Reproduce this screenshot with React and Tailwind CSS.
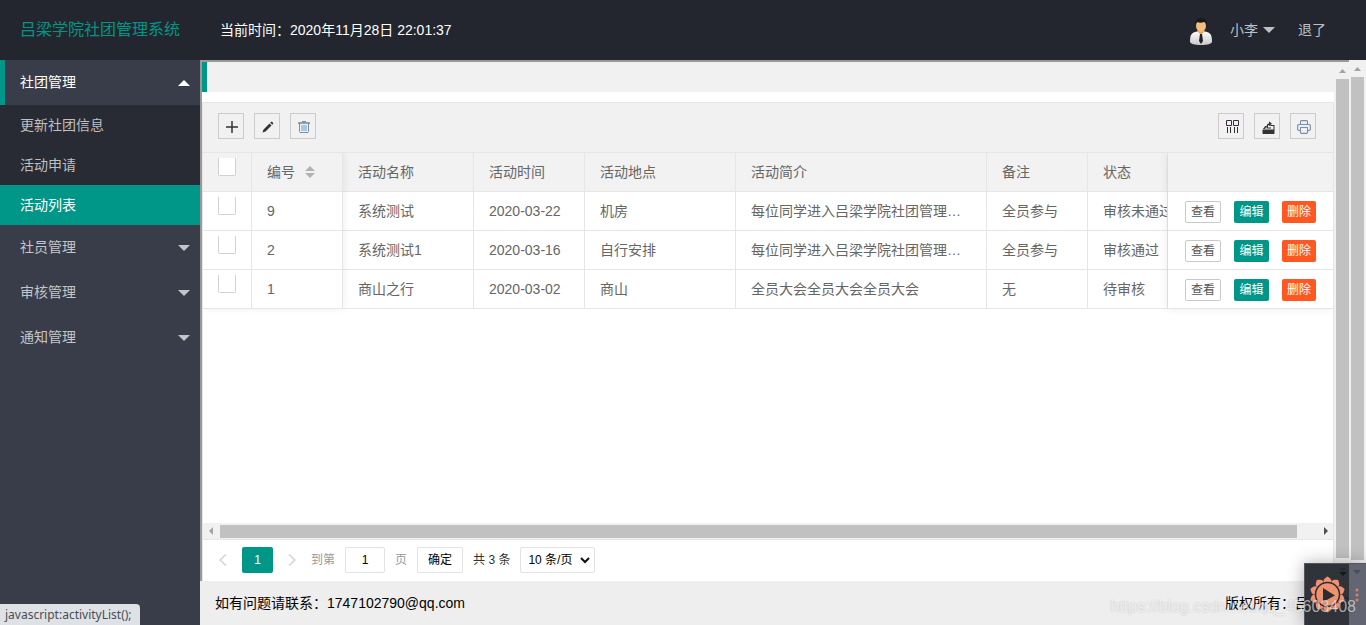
import React from "react";

const rows = [
  { id: "9", name: "系统测试", date: "2020-03-22", place: "机房", intro: "每位同学进入吕梁学院社团管理…", note: "全员参与", status: "审核未通过" },
  { id: "2", name: "系统测试1", date: "2020-03-16", place: "自行安排", intro: "每位同学进入吕梁学院社团管理…", note: "全员参与", status: "审核通过" },
  { id: "1", name: "商山之行", date: "2020-03-02", place: "商山", intro: "全员大会全员大会全员大会", note: "无", status: "待审核" },
];

function Arrow({ className, dir = "down", size = "w-3 h-1.5" }) {
  const d = { down: "M0 0h12L6 6z", up: "M0 6h12L6 0z" }[dir];
  return (
    <svg viewBox="0 0 12 6" preserveAspectRatio="none" className={`${size} ${className}`} fill="currentColor">
      <path d={d} />
    </svg>
  );
}

function MenuGroup({ label, open, children }) {
  return (
    <li>
      <a
        href="#"
        className={
          open
            ? "flex h-[45px] items-center justify-between border-l-[5px] border-[#009688] pr-2.5 pb-0.5 pl-[15px] text-white"
            : "flex h-[45px] items-center justify-between pr-2.5 pb-0.5 pl-5 text-[#c4c5c9]"
        }
      >
        <span>{label}</span>
        <Arrow dir={open ? "up" : "down"} className="mt-0.5" />
      </a>
      {children}
    </li>
  );
}

function SubItem({ label, active }) {
  return (
    <li>
      <a
        href="#"
        className={
          active
            ? "flex h-10 items-center bg-[#009688] pl-5 text-white"
            : "flex h-10 items-center pl-5 text-[#bebfc2]"
        }
      >
        {label}
      </a>
    </li>
  );
}

function ToolButton({ label, children }) {
  return (
    <button type="button" aria-label={label} className="flex size-[26px] items-center justify-center border border-[#ccc] text-[#333]">
      {children}
    </button>
  );
}

function Check({ label }) {
  return (
    <input
      type="checkbox"
      aria-label={label}
      className="mt-[5px] block size-[18px] appearance-none rounded-b-xs border border-t-0 border-[#d2d2d2] bg-white"
    />
  );
}

function VerticalBar({ className, end }) {
  return (
    <div className={`flex shrink-0 flex-col items-center bg-[#f1f1f1] ${className}`}>
      <div className="flex h-[17px] items-center text-[#a3a3a3]">
        <Arrow dir="up" size="w-[7px] h-1" className="" />
      </div>
      <div className="w-[13px] flex-1 bg-[#c1c1c1]" />
      <div className={`flex items-start pt-2.5 text-[#505050] ${end}`}>
        <Arrow size="w-[7px] h-1" className="" />
      </div>
    </div>
  );
}

const petals = [0, 36, 72, 108, 144, 180, 216, 252, 288, 324];
const th = "h-[39px] border-r border-b border-[#e6e6e6] px-[15px] text-left font-normal";
const td = "h-[39px] border-r border-b border-[#e6e6e6] px-[15px]";

export default function App() {
  return (
    <div className="relative flex h-screen flex-col overflow-hidden bg-white font-['Liberation_Sans','Noto_Sans_CJK_SC',sans-serif] text-sm text-[#333]">
      <header className="flex h-[60px] shrink-0 items-center bg-[#23262e]">
        <h1 className="w-[200px] pl-5 text-base text-[#009688]">吕梁学院社团管理系统</h1>
        <div className="pl-5 text-white">当前时间：2020年11月28日 22:01:37</div>
        <nav className="ml-auto flex items-center pr-10 text-[#bfc0c3]">
          <svg viewBox="0 0 24 28" className="mt-1 mr-[17px] h-7 w-6">
            <defs>
              <linearGradient id="shirt" x1="0" y1="0" x2="0" y2="1">
                <stop offset="0" stopColor="#fff" />
                <stop offset="1" stopColor="#c9c9c9" />
              </linearGradient>
            </defs>
            <path d="M1 24c0-6 1-9 5-10l4-1h4l4 1c4 1 5 4 5 10-1 2-4 3-11 3S2 26 1 24z" fill="url(#shirt)" />
            <path d="M9 11h6v3l-3 3-3-3z" fill="#e8a45c" />
            <ellipse cx="12" cy="8" rx="5" ry="6" fill="#f5bd7c" />
            <path d="M6 6c0-4 3-6 6-6s6 2 6 6c-1-1-2-2-3-2-2 1-5 1-7 0-1 0-1 1-2 2z" fill="#1c1a18" />
            <path d="M11 16h2l1 7-2 3-2-3z" fill="#222" />
          </svg>
          <a href="#" className="flex items-center gap-[5px]">
            小李
            <Arrow className="" />
          </a>
          <a href="#" className="ml-[23px]">退了</a>
        </nav>
      </header>

      <div className="flex min-h-0 flex-1">
        <aside className="w-[200px] shrink-0 bg-[#393d49]">
          <ul>
            <MenuGroup label="社团管理" open>
              <ul className="bg-[#282b33]">
                <SubItem label="更新社团信息" />
                <SubItem label="活动申请" />
                <SubItem label="活动列表" active />
              </ul>
            </MenuGroup>
            <MenuGroup label="社员管理" />
            <MenuGroup label="审核管理" />
            <MenuGroup label="通知管理" />
          </ul>
        </aside>

        <div className="flex min-w-0 flex-1 flex-col">
          <div className="flex min-h-0 flex-1">
            <div className="flex min-w-0 flex-1 border-t-2 border-l-2 border-[#999]">
              <main className="flex min-w-0 flex-1 flex-col">
                <div className="mb-2.5 h-[30px] shrink-0 border-l-[5px] border-[#009688] bg-[#f1f1f1]" />
                <div className="flex min-h-0 flex-1 flex-col border-x border-t border-[#e6e6e6]">
                  <div className="flex h-[50px] shrink-0 items-start gap-2.5 border-b border-[#e6e6e6] bg-[#f1f1f1] pt-2.5 pr-[17px] pl-[15px]">
                    <ToolButton label="添加">
                      <svg viewBox="0 0 12 12" className="mt-0.5 ml-0.5 size-3" stroke="currentColor" strokeWidth="1.500"><path d="M6 0v12M0 6h12" /></svg>
                    </ToolButton>
                    <ToolButton label="编辑">
                      <svg viewBox="0 0 12 12" className="mt-0.5 ml-0.5 size-3" fill="currentColor"><path d="M0.500 11.500l1-3L7.500 2.500l2 2L3.500 10.500zM8.200 1.800l1-1c.7-.6 2.600 1.200 2 2l-1 1z" /></svg>
                    </ToolButton>
                    <ToolButton label="删除">
                      <svg viewBox="0 0 12 12" className="mt-0.5 ml-0.5 size-3" fill="none" stroke="#7f8b96">
                        <path d="M4 .5h4" />
                        <path d="M0 2h12" strokeWidth="1.600" />
                        <path d="M1.500 2.500v8l.5 1h8l.5-1v-8" />
                        <path d="M4 4v6M6 4v6M8 4v6" stroke="#5b9fdc" />
                      </svg>
                    </ToolButton>
                    <div className="ml-auto flex gap-2.5">
                      <ToolButton label="筛选列">
                        <svg viewBox="0 0 13 13" className="ml-[3px] size-[13px]" fill="none" stroke="#3a2a40"><path d="M.5 .5h5v5h-5zM7.500 .5h5v5h-5zM1.500 7v6M4.500 7v6M8.500 7v6M11.500 7v6" /></svg>
                      </ToolButton>
                      <ToolButton label="导出">
                        <svg viewBox="0 0 13 13" className="mt-0.5 ml-0.5 size-[13px]" fill="currentColor"><path d="M0.500 8.500h12v4l-.5.500H1l-.5-.5zM1 8L3.200 5h1.600L3 8zM11.500 8.500V5H8.500v-1h4v4.500zM4.500 7c0-3 .5-4.500 2.500-4.500V.3L10 2.800 7 5.300V4C6 4 6 5 6 6.500h3v1H4.500z" /></svg>
                      </ToolButton>
                      <ToolButton label="打印">
                        <svg viewBox="0 0 14 14" className="mt-0.5 ml-0.5 size-3.5" fill="none" stroke="#7c8fa3" strokeWidth="1.100">
                          <path d="M3.500 4V1.500l.7-.9h5.600l.7.9V4M3.500 10.500H1.600L.6 9.500v-4l1-1h10.800l1 1v4l-1 1h-1.900" />
                          <path d="M3.500 7.500h7v5l-.7.9H4.200l-.7-.9z" />
                          <path d="M3.500 4.500h7" stroke="#5b9fdc" />
                        </svg>
                      </ToolButton>
                    </div>
                  </div>

                  <div className="relative min-h-0 flex-1 overflow-hidden">
                    <table className="w-full table-fixed border-separate border-spacing-0 leading-5 whitespace-nowrap text-[#666]">
                      <colgroup>
                        <col className="w-[49px]" />
                        <col className="w-[91px]" />
                        <col className="w-[131px]" />
                        <col className="w-[111px]" />
                        <col className="w-[151px]" />
                        <col className="w-[251px]" />
                        <col className="w-[101px]" />
                        <col />
                        <col className="w-[165px]" />
                      </colgroup>
                      <thead>
                        <tr className="bg-[#f2f2f2]">
                          <th className={`${th} align-top`}><Check label="全选" /></th>
                          <th className={th}>
                            <div className="flex items-center gap-2.5">
                              编号
                              <span className="flex flex-col gap-0.5 text-[#b2b2b2]">
                                <Arrow dir="up" size="w-2.5 h-[5px]" className="" />
                                <Arrow size="w-2.5 h-[5px]" className="" />
                              </span>
                            </div>
                          </th>
                          <th className={th}>活动名称</th>
                          <th className={th}>活动时间</th>
                          <th className={th}>活动地点</th>
                          <th className={th}>活动简介</th>
                          <th className={th}>备注</th>
                          <th className={th}>状态</th>
                          <th className="border-b border-[#e6e6e6]" aria-label="操作" />
                        </tr>
                      </thead>
                      <tbody>
                        {rows.map((r) => (
                          <tr key={r.id}>
                            <td className={`${td} align-top`}><Check label={r.id} /></td>
                            <td className={td}>{r.id}</td>
                            <td className={td}>{r.name}</td>
                            <td className={td}>{r.date}</td>
                            <td className={td}>{r.place}</td>
                            <td className={td}>{r.intro}</td>
                            <td className={td}>{r.note}</td>
                            <td className="overflow-hidden border-r border-b border-[#e6e6e6] pl-[15px]">{r.status}</td>
                            <td className="border-b border-[#e6e6e6] px-[17px]">
                              <div className="flex justify-between pt-0.5 text-xs">
                                <button type="button" className="h-[22px] rounded-xs border border-[#c9c9c9] bg-white px-[5px] text-[#555]">查看</button>
                                <button type="button" className="h-[22px] rounded-xs bg-[#009688] px-[5px] text-white">编辑</button>
                                <button type="button" className="h-[22px] rounded-xs bg-[#ff5722] px-[5px] text-white">删除</button>
                              </div>
                            </td>
                          </tr>
                        ))}
                      </tbody>
                    </table>
                    <div className="pointer-events-none absolute top-0 left-0 h-[156px] w-[140px] shadow-[0_-1px_8px_rgba(0,0,0,0.08)]" />
                    <div className="pointer-events-none absolute top-0 right-0 h-[156px] w-[165px] shadow-[-1px_0_8px_rgba(0,0,0,0.08)]" />
                  </div>

                  <div className="flex h-[17px] shrink-0 items-center border-b border-[#e6e6e6] bg-[#f1f1f1]">
                    <svg viewBox="0 0 17 16" className="h-4 w-[17px]" fill="#a3a3a3"><path d="M10 4v8L6 8z" /></svg>
                    <div className="h-[13px] flex-1 bg-[#c1c1c1]" />
                    <svg viewBox="0 0 36 16" className="h-4 w-9" fill="#505050"><path d="M27 4v8l4-4z" /></svg>
                  </div>

                  <div className="flex h-[41px] shrink-0 items-center pb-0.5 pl-[7px] text-xs">
                    <button type="button" aria-label="上一页" className="flex w-8 justify-start pl-[9px] text-[#d2d2d2]">
                      <svg viewBox="0 0 8 12" className="h-3 w-2" fill="none" stroke="currentColor" strokeWidth="1.500"><path d="M7 .5L1 6l6 5.500" /></svg>
                    </button>
                    <button type="button" className="h-[26px] w-[31px] rounded-xs bg-[#009688] text-white">1</button>
                    <button type="button" aria-label="下一页" className="flex w-[38px] pl-[15px] text-[#d2d2d2]">
                      <svg viewBox="0 0 8 12" className="h-3 w-2" fill="none" stroke="currentColor" strokeWidth="1.500"><path d="M1 .5L7 6l-6 5.500" /></svg>
                    </button>
                    <label className="flex items-center gap-2.5 text-[#999]">
                      到第
                      <input type="text" defaultValue="1" className="h-[26px] w-10 rounded-xs border border-[#e2e2e2] bg-white text-center text-black" />
                      页
                    </label>
                    <button type="button" className="ml-2.5 h-[26px] rounded-xs border border-[#e2e2e2] bg-white px-2.5 text-black">确定</button>
                    <span className="ml-2.5">共 3 条</span>
                    <div className="relative ml-2.5">
                      <select aria-label="每页条数" className="block h-[26px] w-[75px] appearance-none rounded-xs border border-[#e2e2e2] bg-white pl-[7px] text-black">
                        <option>10 条/页</option>
                      </select>
                      <svg viewBox="0 0 10 7" className="pointer-events-none absolute top-2.5 right-[5px] h-[7px] w-2.5" fill="none" stroke="#111" strokeWidth="2"><path d="M1 1l4 4 4-4" /></svg>
                    </div>
                  </div>
                </div>
              </main>
              <VerticalBar className="w-[15px] pl-0.5" end="h-[23px]" />
            </div>
            <VerticalBar className="w-[17px]" end="h-[21px]" />
          </div>
          <footer className="flex h-11 shrink-0 items-center justify-between bg-[#eee] px-[15px] text-black">
            <span>如有问题请联系：1747102790@qq.com</span>
            <span>版权所有：吕梁学院</span>
          </footer>
        </div>
      </div>

      <div className="absolute bottom-0 left-0 flex h-[21px] items-center rounded-tr-sm bg-[#dee1e6] pr-2 pl-[5px] font-['Noto_Sans',sans-serif] text-xs text-[#4a4d51]">
        javascript:activityList();
      </div>

      <div className="absolute right-0 bottom-0 flex h-[62px] w-[62px] border-t border-l border-[#55565b] bg-[#26282f]/95 shadow-[0_0_16px_rgba(0,0,0,0.3)]">
        <svg viewBox="0 0 44 61" className="h-full w-11">
          <g fill="#ee9270">
            {petals.map((a) => (
              <path key={a} d="M18.300 17.500c0-2.500 2-3.500 4.200-5 2.200 1.500 4.200 2.500 4.200 5l-1 1.500h-6.400z" transform={`rotate(${a} 22.5 30.5)`} />
            ))}
            <circle cx="22.500" cy="30.500" r="12" stroke="#2b2d35" strokeWidth="1.500" />
          </g>
          <path d="M18 24v14l12-6.500z" fill="#2b2d35" />
          <path d="M34 8h8l-4 4z" fill="#17181c" />
        </svg>
        <svg viewBox="0 0 17 61" className="h-full flex-1 bg-[#636573]">
          <path d="M4 6h8l-4 4z" fill="#484a56" />
          <g fill="#d98463"><circle cx="8" cy="26" r="1.500" /><circle cx="8" cy="31" r="1.500" /><circle cx="8" cy="36" r="1.500" /></g>
        </svg>
      </div>
      <div className="pointer-events-none absolute right-2.5 bottom-2 text-base leading-5 whitespace-nowrap text-white/60 [text-shadow:0_0_2px_rgba(0,0,0,0.2)]">
        https://blog.csdn.net/qq_45603408
      </div>
    </div>
  );
}
